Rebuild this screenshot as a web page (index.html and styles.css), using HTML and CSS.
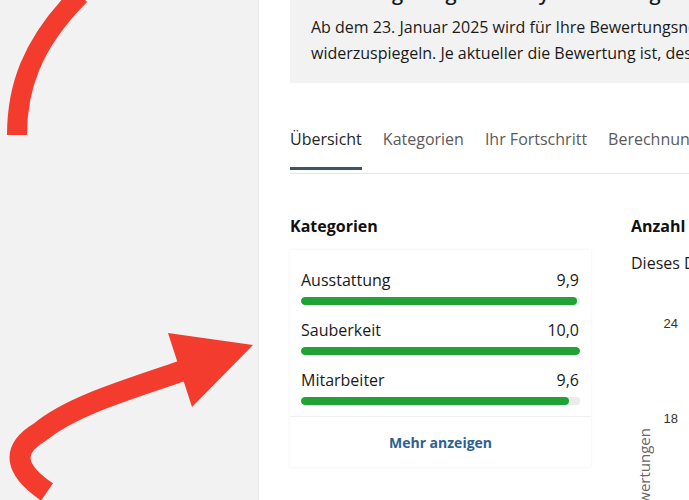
FILE: index.html
```html
<!DOCTYPE html>
<html lang="de">
<head>
<meta charset="utf-8">
<link rel="stylesheet" href="styles.css">
</head>
<body>
<div class="page">
  <aside class="side">
    <svg class="arrows" width="258" height="500" viewBox="0 0 258 500">
      <path d="M17 135 C17 90 30 45 80 -5" fill="none" stroke="#f33c2d" stroke-width="20"/>
      <path d="M47 492 C15 470 10 450 40 432 C70 407 120 392 185 370" fill="none" stroke="#f33c2d" stroke-width="21"/>
      <polygon points="168,333 253,345 192,407" fill="#f33c2d"/>
    </svg>
  </aside>
  <main class="main">
    <section class="notice">
      <h2 class="notice-title">Neue Regelung für Analyse Ihres Ergebnisses</h2>
      <p class="notice-text">Ab dem 23. Januar 2025 wird für Ihre Bewertungsnote ein neues Berechnungsmodell verwendet, um die jüngsten Erfahrungen der Gäste besser<br>widerzuspiegeln. Je aktueller die Bewertung ist, desto mehr Gewicht hat sie.</p>
    </section>
    <nav class="tabs">
      <span class="tab active">Übersicht</span>
      <span class="tab">Kategorien</span>
      <span class="tab">Ihr Fortschritt</span>
      <span class="tab">Berechnung</span>
    </nav>
    <div class="cols">
      <section class="col-left">
        <h3 class="heading">Kategorien</h3>
        <div class="card">
          <div class="rows">
            <div class="row">
              <div class="row-head"><span>Ausstattung</span><span>9,9</span></div>
              <div class="track"><div class="fill" style="width:99%"></div></div>
            </div>
            <div class="row">
              <div class="row-head"><span>Sauberkeit</span><span>10,0</span></div>
              <div class="track"><div class="fill" style="width:100%"></div></div>
            </div>
            <div class="row">
              <div class="row-head"><span>Mitarbeiter</span><span>9,6</span></div>
              <div class="track"><div class="fill" style="width:96%"></div></div>
            </div>
          </div>
          <div class="more">Mehr anzeigen</div>
        </div>
        <h3 class="heading next">Bewertungsergebnis</h3>
      </section>
      <section class="col-right">
        <h3 class="heading">Anzahl der Bewertungen</h3>
        <p class="sub">Dieses Diagramm zeigt die Anzahl</p>
        <div class="chart">
          <span class="axis-title">Anzahl der Bewertungen</span>
          <div class="ticks">
            <span class="tick">24</span>
            <span class="tick">18</span>
            <span class="tick">12</span>
          </div>
        </div>
      </section>
    </div>
  </main>
</div>
</body>
</html>
```

FILE: styles.css
```css
* { box-sizing: border-box; }
html, body { margin: 0; padding: 0; }
body {
  font-family: "Open Sans", "Noto Sans", sans-serif;
  color: #1a1a1a;
  background: #fff;
  width: 689px;
  height: 500px;
  overflow: hidden;
}
.page {
  display: flex;
  height: 500px;
  overflow: hidden;
}
.side {
  flex: 0 0 258px;
  background: #f2f2f2;
  border-right: 1px solid #e9e9e9;
}
.arrows { display: block; }
.main {
  flex: 0 0 1100px;
  padding-left: 31px;
  margin-top: -37px;
  background: #fff;
}
.notice {
  background: #f2f2f2;
  padding: 16px 0 17px 21px;
}
.notice-title {
  margin: 0;
  font-size: 20px;
  line-height: 28px;
  font-weight: 600;
  white-space: nowrap;
}
.notice-text {
  margin: 7px 0 0;
  font-size: 16px;
  line-height: 26px;
  white-space: nowrap;
}
.tabs {
  display: flex;
  gap: 21px;
  margin-top: 32px;
  padding-bottom: 3px;
  border-bottom: 1px solid #e4e4e4;
}
.tab {
  font-size: 16px;
  line-height: 24px;
  padding: 12px 0 16px;
  color: #5a5a5a;
  border-bottom: 3px solid transparent;
  white-space: nowrap;
}
.tab.active {
  color: #262626;
  border-bottom-color: #3b5565;
}
.cols {
  display: flex;
  gap: 40px;
  margin-top: 40px;
}
.col-left { flex: 0 0 301px; }
.col-right { flex: 0 0 400px; white-space: nowrap; }
.heading {
  margin: 0;
  font-size: 16px;
  line-height: 24px;
  font-weight: 700;
  color: #111;
}
.heading.next { margin-top: 27px; color: #222; }
.card {
  margin-top: 12px;
  background: #fff;
  box-shadow: 0 0 3px rgba(0,0,0,0.07);
}
.rows {
  padding: 18px 11px 11px;
  display: flex;
  flex-direction: column;
  gap: 13px;
  border-bottom: 1px solid #f0f0f0;
}
.row-head {
  display: flex;
  justify-content: space-between;
  font-size: 16px;
  line-height: 24px;
  padding-right: 1px;
  margin-bottom: 5px;
}
.track {
  height: 8px;
  background: #ebebeb;
  border-radius: 4px;
  overflow: hidden;
}
.fill {
  height: 100%;
  background: #20a334;
  border-radius: 4px;
}
.more {
  height: 50px;
  display: flex;
  align-items: center;
  justify-content: center;
  font-size: 14px;
  font-weight: 700;
  color: #2c6190;
}
.sub {
  margin: 13px 0 0;
  font-size: 16px;
  line-height: 24px;
}
.chart {
  display: flex;
  gap: 10px;
  padding-left: 5px;
}
.axis-title {
  writing-mode: vertical-rl;
  transform: rotate(180deg);
  font-size: 15px;
  line-height: 16px;
  color: #666;
  margin-top: 153px;
}
.ticks {
  display: flex;
  flex-direction: column;
  gap: 79px;
  padding-top: 41px;
  width: 16px;
  text-align: right;
}
.tick {
  font-family: "Liberation Sans", Arial, sans-serif;
  font-size: 13px;
  line-height: 16px;
  color: #333;
}
```
